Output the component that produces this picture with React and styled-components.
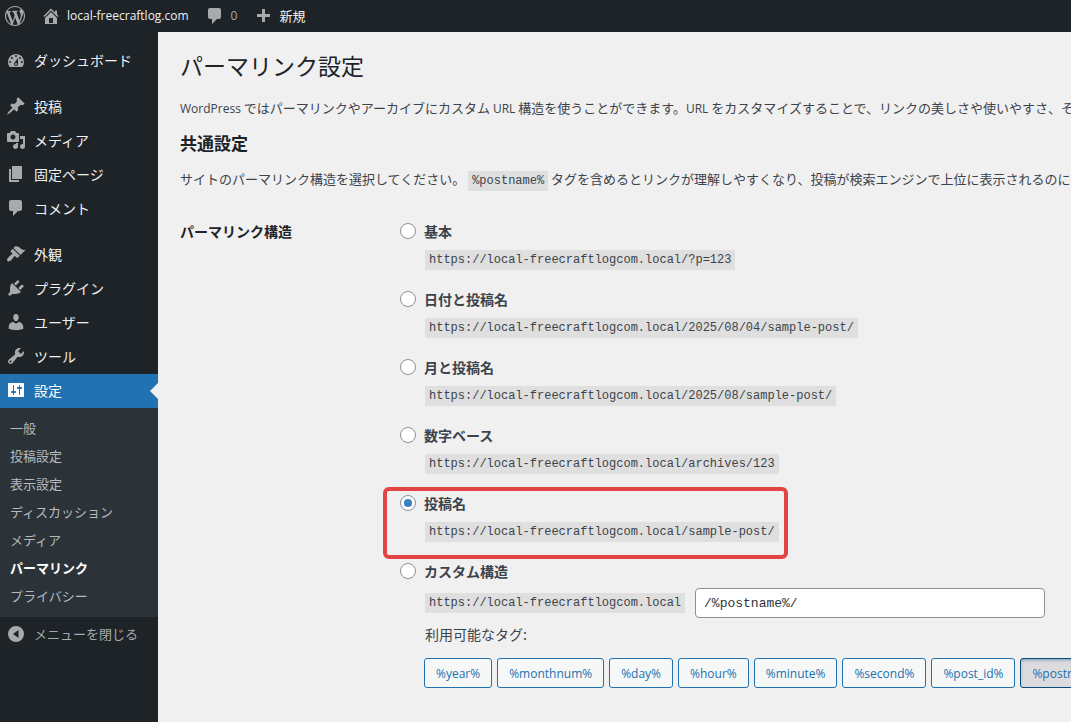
import React, { useState } from "react";
import styled, { createGlobalStyle, css } from "styled-components";

const icons = {
  wordpress:
    "M20 10c0-5.51-4.49-10-10-10C4.48 0 0 4.49 0 10c0 5.52 4.48 10 10 10 5.51 0 10-4.48 10-10zM7.78 15.37L4.37 6.22c.55-.02 1.17-.08 1.17-.08.5-.06.44-1.13-.06-1.11 0 0-1.45.11-2.37.11-.18 0-.37 0-.58-.01C4.12 2.69 6.87 1.11 10 1.11c2.33 0 4.45.87 6.05 2.34-.68-.11-1.65.39-1.65 1.58 0 .74.45 1.36.9 2.1.35.61.55 1.36.55 2.46 0 1.49-1.4 5-1.4 5l-3.03-8.37c.54-.02.82-.17.82-.17.5-.05.44-1.25-.06-1.22 0 0-1.44.12-2.38.12-.87 0-2.33-.12-2.33-.12-.5-.03-.56 1.2-.06 1.22l.92.08 1.26 3.41zM17.41 10c.24-.64.74-1.87.43-4.25.7 1.29 1.05 2.71 1.05 4.25 0 3.29-1.73 6.24-4.4 7.78.97-2.59 1.94-5.2 2.92-7.78zM6.1 18.09C3.12 16.65 1.11 13.53 1.11 10c0-1.3.23-2.48.72-3.59C3.25 10.3 4.67 14.2 6.1 18.09zm4.03-6.63l2.58 6.98c-.86.29-1.76.45-2.71.45-.79 0-1.57-.11-2.29-.33.81-2.38 1.62-4.74 2.42-7.1z",
  home: "M16 8.5l1.53 1.53-1.06 1.06L10 4.6l-6.47 6.49-1.06-1.06L10 2.5l4 4v-2h2v4zm-6-2.46l6 5.99V18H4v-5.97zM12 17v-5H8v5h4z",
  plus: "M17 8v3h-5v5H9v-5H4V8h5V3h3v5h5z",
  dashboard:
    "M3.76 17h12.48c1.1-1.37 1.76-3.11 1.76-5 0-4.42-3.58-8-8-8s-8 3.58-8 8c0 1.89.66 3.63 1.76 5zM10 5a1 1 0 1 1 0 2a1 1 0 1 1 0-2zM6 7a1 1 0 1 1 0 2a1 1 0 1 1 0-2zM14 7a1 1 0 1 1 0 2a1 1 0 1 1 0-2zM4 11a1 1 0 1 1 0 2a1 1 0 1 1 0-2zM16 11a1 1 0 1 1 0 2a1 1 0 1 1 0-2zM8.63 12.55L12 8v6a2 2 0 0 1-4 0c0-.57.24-1.08.63-1.45zM10 13a1 1 0 1 0 0 2a1 1 0 1 0 0-2z",
  post: "M10.44 3.02l1.82-1.82 6.36 6.35-1.83 1.82c-1.05-.68-2.48-.57-3.41.36l-.75.75c-.92.93-1.04 2.35-.35 3.41l-1.83 1.82-2.41-2.41-2.8 2.79c-.42.42-3.38 2.71-3.8 2.29s1.86-3.39 2.28-3.81l2.79-2.79L4.1 9.36l1.83-1.82c1.05.69 2.48.57 3.4-.36l.75-.75c.93-.92 1.05-2.35.36-3.41z",
  media:
    "M13 11V4c0-.55-.45-1-1-1h-1.67L9 1H5L3.67 3H2c-.55 0-1 .45-1 1v7c0 .55.45 1 1 1h10c.55 0 1-.45 1-1zM7 4.5c1.38 0 2.5 1.12 2.5 2.5S8.38 9.5 7 9.5 4.5 8.38 4.5 7 5.62 4.5 7 4.5zM14 6h5v10.5c0 1.38-1.12 2.5-2.5 2.5S14 17.88 14 16.5s1.12-2.5 2.5-2.5c.17 0 .34.02.5.05V9h-3V6zm-4 8.05V13h2v3.5c0 1.38-1.12 2.5-2.5 2.5S7 17.88 7 16.5 8.12 14 9.5 14c.17 0 .34.02.5.05z",
  page: "M6 15V2h10v13H6zm-1 1h8v2H3V5h2v11z",
  comment:
    "M5 2h9c1.1 0 2 .9 2 2v7c0 1.1-.9 2-2 2h-2l-5 5v-5H5c-1.1 0-2-.9-2-2V4c0-1.1.9-2 2-2z",
  appearance:
    "M14.48 11.06L7.41 3.99l1.5-1.5c.5-.56 2.3-.47 3.51.32 1.21.8 1.43 1.28 2.91 2.1 1.18.64 2.45 1.26 4.45.85zm-.71.71L6.7 4.7 4.93 6.47c-.39.39-.39 1.02 0 1.41l1.06 1.06c.39.39.39 1.03 0 1.42-.6.6-1.43 1.11-2.21 1.69-.35.26-.7.53-1.01.84C1.43 14.23.4 16.08 1.4 17.07c.99 1 2.84-.03 4.18-1.36.31-.31.58-.66.85-1.02.57-.78 1.08-1.61 1.69-2.21.39-.39 1.02-.39 1.41 0l1.06 1.06c.39.39 1.02.39 1.41 0z",
  plugins:
    "M13.11 4.36L9.87 7.6 8 5.73l3.24-3.24c.35-.34 1.05-.2 1.56.32.52.51.66 1.21.31 1.55zm-8 1.77l.91-1.12 9.01 9.01-1.19.84c-.71.71-2.63 1.16-3.82 1.16H6.14L4.9 17.26c-.59.59-1.54.59-2.12 0-.59-.58-.59-1.53 0-2.12l1.24-1.24v-3.88c0-1.13.4-3.19 1.09-3.89zm7.26 3.97l3.24-3.24c.34-.35 1.04-.21 1.55.31.52.51.66 1.21.31 1.55l-3.24 3.25z",
  users:
    "M10 9.25c-2.27 0-2.73-3.44-2.73-3.44C7 4.02 7.82 2 9.97 2c2.16 0 2.98 2.02 2.71 3.81 0 0-.41 3.44-2.68 3.44zm0 2.57L12.72 10c2.39 0 4.52 2.33 4.52 4.53v2.49s-3.65 1.13-7.24 1.13c-3.65 0-7.24-1.13-7.24-1.13v-2.49c0-2.25 1.94-4.48 4.47-4.48z",
  tools:
    "M16.68 9.77c-1.34 1.34-3.3 1.67-4.95.99l-5.41 6.52c-.99.99-2.59.99-3.58 0s-.99-2.59 0-3.57l6.52-5.42c-.68-1.65-.35-3.61.99-4.95 1.28-1.28 3.12-1.62 4.72-1.06l-2.89 2.89 2.82 2.82 2.86-2.87c.53 1.58.18 3.39-1.08 4.65zM3.81 16.21c.4.39 1.04.39 1.43 0 .4-.4.4-1.04 0-1.43-.39-.4-1.03-.4-1.43 0-.39.39-.39 1.03 0 1.43z",
  settings:
    "M18 16V4c0-.55-.45-1-1-1H3c-.55 0-1 .45-1 1v12c0 .55.45 1 1 1h14c.55 0 1-.45 1-1zM8 11h1c.55 0 1 .45 1 1s-.45 1-1 1H8v1.5c0 .28-.22.5-.5.5s-.5-.22-.5-.5V13H6c-.55 0-1-.45-1-1s.45-1 1-1h1V5.5c0-.28.22-.5.5-.5s.5.22.5.5V11zm5-2h-1c-.55 0-1-.45-1-1s.45-1 1-1h1V5.5c0-.28.22-.5.5-.5s.5.22.5.5V7h1c.55 0 1 .45 1 1s-.45 1-1 1h-1v5.5c0 .28-.22.5-.5.5s-.5-.22-.5-.5V9z",
  collapse:
    "M10 2a8 8 0 1 0 0 16a8 8 0 1 0 0-16zM12.5 6v8L7 10z",
};

const menuGroups = [
  [{ icon: "dashboard", label: "ダッシュボード" }],
  [
    { icon: "post", label: "投稿" },
    { icon: "media", label: "メディア" },
    { icon: "page", label: "固定ページ" },
    { icon: "comment", label: "コメント" },
  ],
  [
    { icon: "appearance", label: "外観" },
    { icon: "plugins", label: "プラグイン" },
    { icon: "users", label: "ユーザー" },
    { icon: "tools", label: "ツール" },
    { icon: "settings", label: "設定", current: true },
  ],
];

const submenu = [
  "一般",
  "投稿設定",
  "表示設定",
  "ディスカッション",
  "メディア",
  "パーマリンク",
  "プライバシー",
];

const siteUrl = "https://local-freecraftlogcom.local";

const structures = [
  { id: "plain", label: "基本", path: "/?p=123" },
  { id: "day", label: "日付と投稿名", path: "/2025/08/04/sample-post/" },
  { id: "month", label: "月と投稿名", path: "/2025/08/sample-post/" },
  { id: "numeric", label: "数字ベース", path: "/archives/123" },
  { id: "postname", label: "投稿名", path: "/sample-post/", marked: true },
];

const tags = [
  "%year%",
  "%monthnum%",
  "%day%",
  "%hour%",
  "%minute%",
  "%second%",
  "%post_id%",
  "%postname%",
];

const Icon = ({ name }) => (
  <IconSvg viewBox="0 0 20 20" aria-hidden="true">
    <path d={icons[name]} fillRule="evenodd" />
  </IconSvg>
);

const AdminBar = () => (
  <Bar>
    <BarLink href="#" aria-label="WordPress について">
      <Icon name="wordpress" />
    </BarLink>
    <BarLink href="#">
      <Icon name="home" />
      <Latin>local-freecraftlog.com</Latin>
    </BarLink>
    <BarLink href="#" $muted>
      <Icon name="comment" />
      <Latin>0</Latin>
    </BarLink>
    <BarLink href="#">
      <Icon name="plus" />
      新規
    </BarLink>
  </Bar>
);

const AdminMenu = () => (
  <Sidebar>
    {menuGroups.map((group, index) => (
      <MenuGroup key={index}>
        {group.map((item) => (
          <li key={item.label}>
            <MenuLink href="#" $current={item.current}>
              <Icon name={item.icon} />
              {item.label}
            </MenuLink>
          </li>
        ))}
      </MenuGroup>
    ))}
    <Submenu>
      {submenu.map((label) => (
        <li key={label}>
          <SubmenuLink href="#" $current={label === "パーマリンク"}>
            {label}
          </SubmenuLink>
        </li>
      ))}
    </Submenu>
    <CollapseButton type="button">
      <Icon name="collapse" />
      メニューを閉じる
    </CollapseButton>
  </Sidebar>
);

const App = () => {
  const [selected, setSelected] = useState("postname");
  const [custom, setCustom] = useState("/%postname%/");

  const toggleTag = (tag) => {
    setCustom(
      custom.includes(tag) ? custom.replace(`${tag}/`, "") : `${custom}${tag}/`
    );
    setSelected("custom");
  };

  return (
    <>
      <GlobalStyle />
      <AdminBar />
      <Body>
        <AdminMenu />
        <Content>
          <Title>パーマリンク設定</Title>
          <Text>
            <Latin>WordPress</Latin> ではパーマリンクやアーカイブにカスタム{" "}
            <Latin>URL</Latin> 構造を使うことができます。<Latin>URL</Latin>{" "}
            をカスタマイズすることで、リンクの美しさや使いやすさ、そして前方互換性を改善できます。
          </Text>
          <SectionTitle>共通設定</SectionTitle>
          <Text>
            サイトのパーマリンク構造を選択してください。 <Code>%postname%</Code>{" "}
            タグを含めるとリンクが理解しやすくなり、投稿が検索エンジンで上位に表示されるのに役立ちます。
          </Text>
          <FormRow>
            <FormHeading id="structure-heading">パーマリンク構造</FormHeading>
            <Options aria-labelledby="structure-heading">
              {structures.map(({ id, label, path, marked }) => (
                <Option key={id} $marked={marked}>
                  <OptionLabel>
                    <Radio
                      name="structure"
                      value={id}
                      checked={selected === id}
                      onChange={() => setSelected(id)}
                    />
                    {label}
                  </OptionLabel>
                  <OptionDetail>
                    <Code>{siteUrl + path}</Code>
                  </OptionDetail>
                </Option>
              ))}
              <CustomOption>
                <OptionLabel>
                  <Radio
                    name="structure"
                    value="custom"
                    checked={selected === "custom"}
                    onChange={() => setSelected("custom")}
                  />
                  カスタム構造
                </OptionLabel>
                <CustomRow>
                  <Code>{siteUrl}</Code>
                  <TextInput
                    aria-label="カスタム構造"
                    value={custom}
                    onChange={(e) => setCustom(e.target.value)}
                  />
                </CustomRow>
                <TagsHeading>利用可能なタグ:</TagsHeading>
                <TagList>
                  {tags.map((tag) => (
                    <li key={tag}>
                      <TagButton
                        type="button"
                        $active={custom.includes(tag)}
                        onClick={() => toggleTag(tag)}
                      >
                        {tag}
                      </TagButton>
                    </li>
                  ))}
                </TagList>
              </CustomOption>
            </Options>
          </FormRow>
        </Content>
      </Body>
    </>
  );
};

const GlobalStyle = createGlobalStyle`
  * {
    box-sizing: border-box;
  }
  body {
    margin: 0;
    overflow-x: hidden;
    background: #f0f0f1;
    color: #3c434a;
    font-family: "Noto Sans CJK JP", sans-serif;
    font-size: 13px;
    line-height: 20px;
  }
  ul {
    margin: 0;
    padding: 0;
    list-style: none;
  }
  a {
    text-decoration: none;
  }
`;

const Latin = styled.span`
  font-family: "Open Sans", sans-serif;
  font-size: 12px;
`;

const IconSvg = styled.svg`
  width: 20px;
  height: 20px;
  flex: none;
  fill: #a7aaad;
`;

const Bar = styled.nav`
  display: flex;
  align-items: center;
  gap: 16px;
  height: 32px;
  padding: 0 5px;
  background: #1d2327;
`;

const BarLink = styled.a`
  display: flex;
  align-items: center;
  gap: 6px;
  color: ${(props) => (props.$muted ? "#a7aaad" : "#f0f0f1")};
`;

const Body = styled.div`
  display: flex;
  min-height: calc(100vh - 32px);
`;

const Sidebar = styled.nav`
  flex: none;
  width: 158px;
  padding-top: 12px;
  background: #1d2327;
`;

const MenuGroup = styled.ul`
  & + & {
    margin-top: 12px;
  }
`;

const MenuLink = styled.a`
  position: relative;
  display: flex;
  align-items: center;
  gap: 8px;
  height: 34px;
  padding: 0 6px 2px;
  color: #f0f0f1;
  font-size: 14px;
  ${(props) =>
    props.$current &&
    css`
      background: #2271b1;
      color: #fff;
      ${IconSvg} {
        fill: #fff;
      }
      &::after {
        content: "";
        position: absolute;
        right: 0;
        top: 9px;
        border: 8px solid transparent;
        border-left: 0;
        border-right-color: #f0f0f1;
      }
    `}
`;

const Submenu = styled.ul`
  padding: 6px 0 7px;
  background: #2c3338;
`;

const SubmenuLink = styled.a`
  display: block;
  padding: 4px 10px;
  color: ${(props) => (props.$current ? "#fff" : "#b5bbc0")};
  font-weight: ${(props) => (props.$current ? 700 : 400)};
`;

const CollapseButton = styled.button`
  display: flex;
  align-items: center;
  gap: 8px;
  width: 100%;
  height: 34px;
  padding: 0 6px;
  border: 0;
  background: none;
  color: #a7aaad;
  font: inherit;
`;

const Content = styled.main`
  flex: 1;
  min-width: 0;
  padding: 15px 20px 20px 22px;
  overflow: hidden;
`;

const Title = styled.h1`
  margin: 0;
  color: #1d2327;
  font-size: 23px;
  font-weight: 400;
  line-height: 36px;
`;

const SectionTitle = styled.h2`
  margin: 14px 0 16px;
  color: #1d2327;
  font-size: 17px;
  line-height: 20px;
`;

const Text = styled.p`
  margin: 0;
  white-space: nowrap;
  ${Title} + & {
    margin-top: 15px;
  }
`;

const Code = styled.code`
  display: inline-block;
  padding: 0 4px;
  background: #dfdfe0;
  font-family: "Liberation Mono", monospace;
  font-size: 12px;
  line-height: 20px;
  white-space: nowrap;
`;

const FormRow = styled.section`
  display: grid;
  grid-template-columns: 220px 1fr;
  margin-top: 30px;
`;

const FormHeading = styled.h3`
  margin: 0;
  color: #1d2327;
  font-size: 14px;
  line-height: 20px;
`;

const Options = styled.fieldset`
  display: grid;
  justify-items: start;
  gap: 19px;
  min-width: 0;
  margin: 0;
  padding: 0;
  border: 0;
  font-size: 14px;
`;

const Option = styled.div`
  position: relative;
  ${(props) =>
    props.$marked &&
    css`
      &::after {
        content: "";
        position: absolute;
        inset: -6px -9px -17px -17px;
        border: 4px solid #e24444;
        border-radius: 6px;
        pointer-events: none;
      }
    `}
`;

const OptionLabel = styled.label`
  display: flex;
  align-items: center;
  gap: 8px;
  font-weight: 700;
`;

const Radio = styled.input.attrs({ type: "radio" })`
  display: grid;
  place-items: center;
  width: 16px;
  height: 16px;
  margin: 0;
  border: 1px solid #8c8f94;
  border-radius: 50%;
  background: #fff;
  appearance: none;
  &:checked::before {
    content: "";
    width: 8px;
    height: 8px;
    border-radius: 50%;
    background: #3582c4;
  }
`;

const OptionDetail = styled.div`
  display: flex;
  margin-top: 9px;
  padding-left: 25px;
`;

const CustomOption = styled.div`
  min-width: 0;
`;

const CustomRow = styled.div`
  display: flex;
  align-items: center;
  gap: 10px;
  margin-top: 7px;
  padding-left: 25px;
`;

const TextInput = styled.input.attrs({ type: "text" })`
  width: 350px;
  height: 30px;
  padding: 0 8px;
  border: 1px solid #8c8f94;
  border-radius: 4px;
  background: #fff;
  color: #2c3338;
  font-family: "Liberation Mono", monospace;
  font-size: 13px;
`;

const TagsHeading = styled.p`
  margin: 6px 0 14px;
  padding-left: 25px;
`;

const TagList = styled.ul`
  display: flex;
  gap: 5px;
  padding-left: 24px;
`;

const TagButton = styled.button`
  height: 30px;
  padding: 0 11px;
  border: 1px solid #2271b1;
  border-radius: 3px;
  background: #f6f7f7;
  color: #2271b1;
  font-family: "Open Sans", sans-serif;
  font-size: 12px;
  white-space: nowrap;
  ${(props) =>
    props.$active &&
    css`
      border-color: #0a4b78;
      background: #dcdcde;
      box-shadow: inset 0 2px 5px -3px #0a4b78;
    `}
`;

export default App;
